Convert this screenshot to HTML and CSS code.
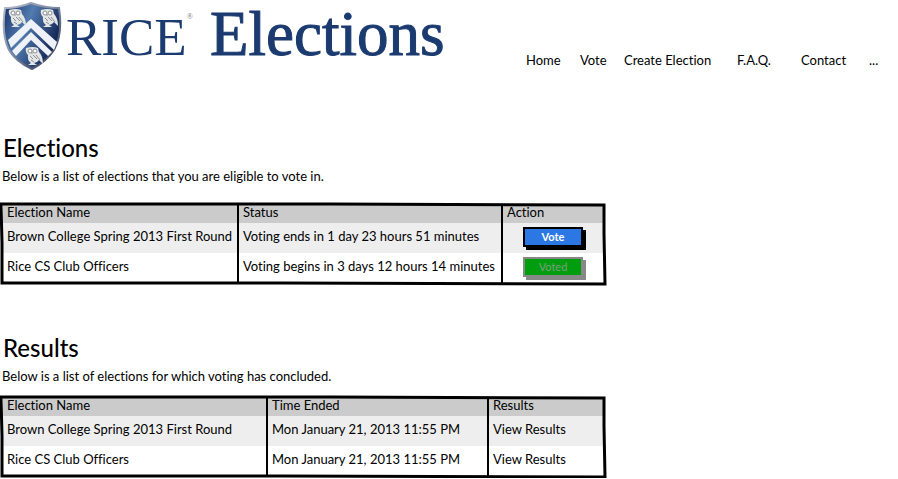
FILE: index.html
```html
<!DOCTYPE html>
<html lang="en">
<head>
<meta charset="utf-8">
<title>Rice Elections</title>
<link rel="stylesheet" href="styles.css">
</head>
<body>
<header class="header">
  <div class="brand">
    <svg class="shield" viewBox="0 0 60 70" aria-hidden="true">
      <defs>
        <linearGradient id="field" x1="0" y1="0" x2="1" y2="0.5">
          <stop offset="0" stop-color="#172f66"/><stop offset="0.45" stop-color="#527bb0"/><stop offset="1" stop-color="#10224f"/>
        </linearGradient>
        <linearGradient id="rim" x1="0" y1="0" x2="1" y2="1">
          <stop offset="0" stop-color="#b8bdca"/><stop offset="0.5" stop-color="#7d879e"/><stop offset="1" stop-color="#232e4b"/>
        </linearGradient>
        <g id="owl">
          <path d="M-7 -8Q0 -10 5 -8L6 -4Q10 0 10 8L6 4Q4 7 1 7L4 9H-5L-2 7Q-6 4 -5 -1Q-8 -4 -7 -8Z" fill="#e4e5e5"/>
          <circle cx="-3" cy="-5" r="2" fill="#fff" stroke="#8a9099"/><circle cx="2" cy="-5" r="2" fill="#fff" stroke="#8a9099"/>
          <path d="M-1 -4V-2M-3 0L0 3M0 -1L4 3M3 -1L7 4M-2 4L1 6" stroke="#8b9098" fill="none"/>
        </g>
      </defs>
      <path d="M3 6Q16 6 29 1Q43 6 57 6Q61 32 52 48Q44 60 30 67Q14 60 7 48Q-1 32 3 6Z" fill="url(#field)" stroke="url(#rim)" stroke-width="2"/>
      <path d="M6 38L29 17L55 40L52 48L29 26L9 46Z" fill="#eef2f8"/>
      <path d="M10 49L29 30L50 50L46 54L29 38L14 54Z" fill="#eef2f8"/>
      <use href="#owl" x="14" y="16"/><use href="#owl" x="46" y="16"/><use href="#owl" x="31" y="54"/>
    </svg>
    <span class="university">RICE<sup>®</sup></span>
    <span class="product">Elections</span>
  </div>
  <nav class="nav">
    <a href="#">Home</a><a href="#">Vote</a><a href="#">Create Election</a><a href="#">F.A.Q.</a><a href="#">Contact</a><a href="#">...</a>
  </nav>
</header>
<main>
  <section class="section">
    <h1>Elections</h1>
    <p>Below is a list of elections that you are eligible to vote in.</p>
    <div class="sheet sheet-elections">
      <table>
        <colgroup><col class="c-name"><col class="c-status"><col></colgroup>
        <thead><tr><th>Election Name</th><th>Status</th><th>Action</th></tr></thead>
        <tbody>
          <tr><td>Brown College Spring 2013 First Round</td><td>Voting ends in 1 day 23 hours 51 minutes</td><td class="action"><button class="btn">Vote</button></td></tr>
          <tr><td>Rice CS Club Officers</td><td>Voting begins in 3 days 12 hours 14 minutes</td><td class="action"><button class="btn btn-done" disabled>Voted</button></td></tr>
        </tbody>
      </table>
      <svg class="frame" viewBox="0 0 604 82" preserveAspectRatio="none" aria-hidden="true"><path d="M0 1L330 1L603 2L603 30L604 81L280 80L1 80L1 40Z"/></svg>
    </div>
  </section>
  <section class="section">
    <h1>Results</h1>
    <p>Below is a list of elections for which voting has concluded.</p>
    <div class="sheet sheet-results">
      <table>
        <colgroup><col class="c-election"><col class="c-ended"><col></colgroup>
        <thead><tr><th>Election Name</th><th>Time Ended</th><th>Results</th></tr></thead>
        <tbody>
          <tr><td>Brown College Spring 2013 First Round</td><td>Mon January 21, 2013 11:55 PM</td><td><a href="#">View Results</a></td></tr>
          <tr><td>Rice CS Club Officers</td><td>Mon January 21, 2013 11:55 PM</td><td><a href="#">View Results</a></td></tr>
        </tbody>
      </table>
      <svg class="frame" viewBox="0 0 604 82" preserveAspectRatio="none" aria-hidden="true"><path d="M0 1L330 1L603 2L603 30L604 81L280 80L1 80L1 40Z"/></svg>
    </div>
  </section>
</main>
</body>
</html>
```
FILE: styles.css
```css
* { box-sizing: border-box; }
body { margin: 0; background: #fff; color: #000; font: 13px/18px Lato, "Open Sans", sans-serif; font-variant-ligatures: none; }
a { color: inherit; text-decoration: none; }
.header { display: flex; justify-content: space-between; height: 71px; }
.brand { display: flex; color: #1b3b70; font-family: "Liberation Serif", serif; white-space: nowrap; }
.shield { flex: none; width: 60px; height: 70px; margin: 2px 4px 0 2px; }
.university { width: 144px; font-size: 53px; line-height: 74px; }
.university sup { font-size: 8px; line-height: 8px; vertical-align: 36px; color: #777; }
.product { font-size: 63px; line-height: 68px; -webkit-text-stroke: 1px #1b3b70; }
.nav { display: grid; grid-template-columns: 54px 44px 113px 64px 68px 29px; align-self: end; padding-bottom: 2px; white-space: nowrap; }
.section { padding: 62px 0 0 1px; }
.section + .section { padding-top: 48px; }
h1 { margin: 0; padding-left: 2px; font-size: 24px; line-height: 30px; font-weight: 500; }
p { margin: 4px 0 0; padding-left: 1px; }
.sheet { position: relative; width: 100%; max-width: 604px; padding: 2px; }
.sheet-elections { margin-top: 18px; }
.sheet-results { margin-top: 11px; }
.frame { position: absolute; inset: 0; width: 100%; height: 100%; overflow: visible; fill: none; stroke: #000; stroke-width: 3px; pointer-events: none; }
table { width: 100%; border-collapse: collapse; table-layout: fixed; }
.c-name { width: 235px; }
.c-status { width: 264px; }
.c-election { width: 264px; }
.c-ended { width: 221px; }
th, td { padding: 0 4px; text-align: left; font-weight: 400; white-space: nowrap; }
th + th, td + td { border-left: 2px solid #000; }
th { height: 18px; line-height: 14px; padding-bottom: 4px; background: #cbcbcb; }
td { height: 30px; padding-bottom: 4px; }
tbody tr:nth-child(odd) { background: #eee; }
td.action { text-align: center; padding-bottom: 2px; }
.btn { display: block; width: 60px; height: 20px; margin: 0 auto; padding: 0; border: 2px solid #000; background: #2b78e4; color: #fff; font: 700 11px/14px Lato, sans-serif; box-shadow: 3px 3px #000; }
.btn-done { border-color: #888; background: #009e0f; color: #7c9c7c; font-weight: 400; box-shadow: 3px 3px #888; }
```
